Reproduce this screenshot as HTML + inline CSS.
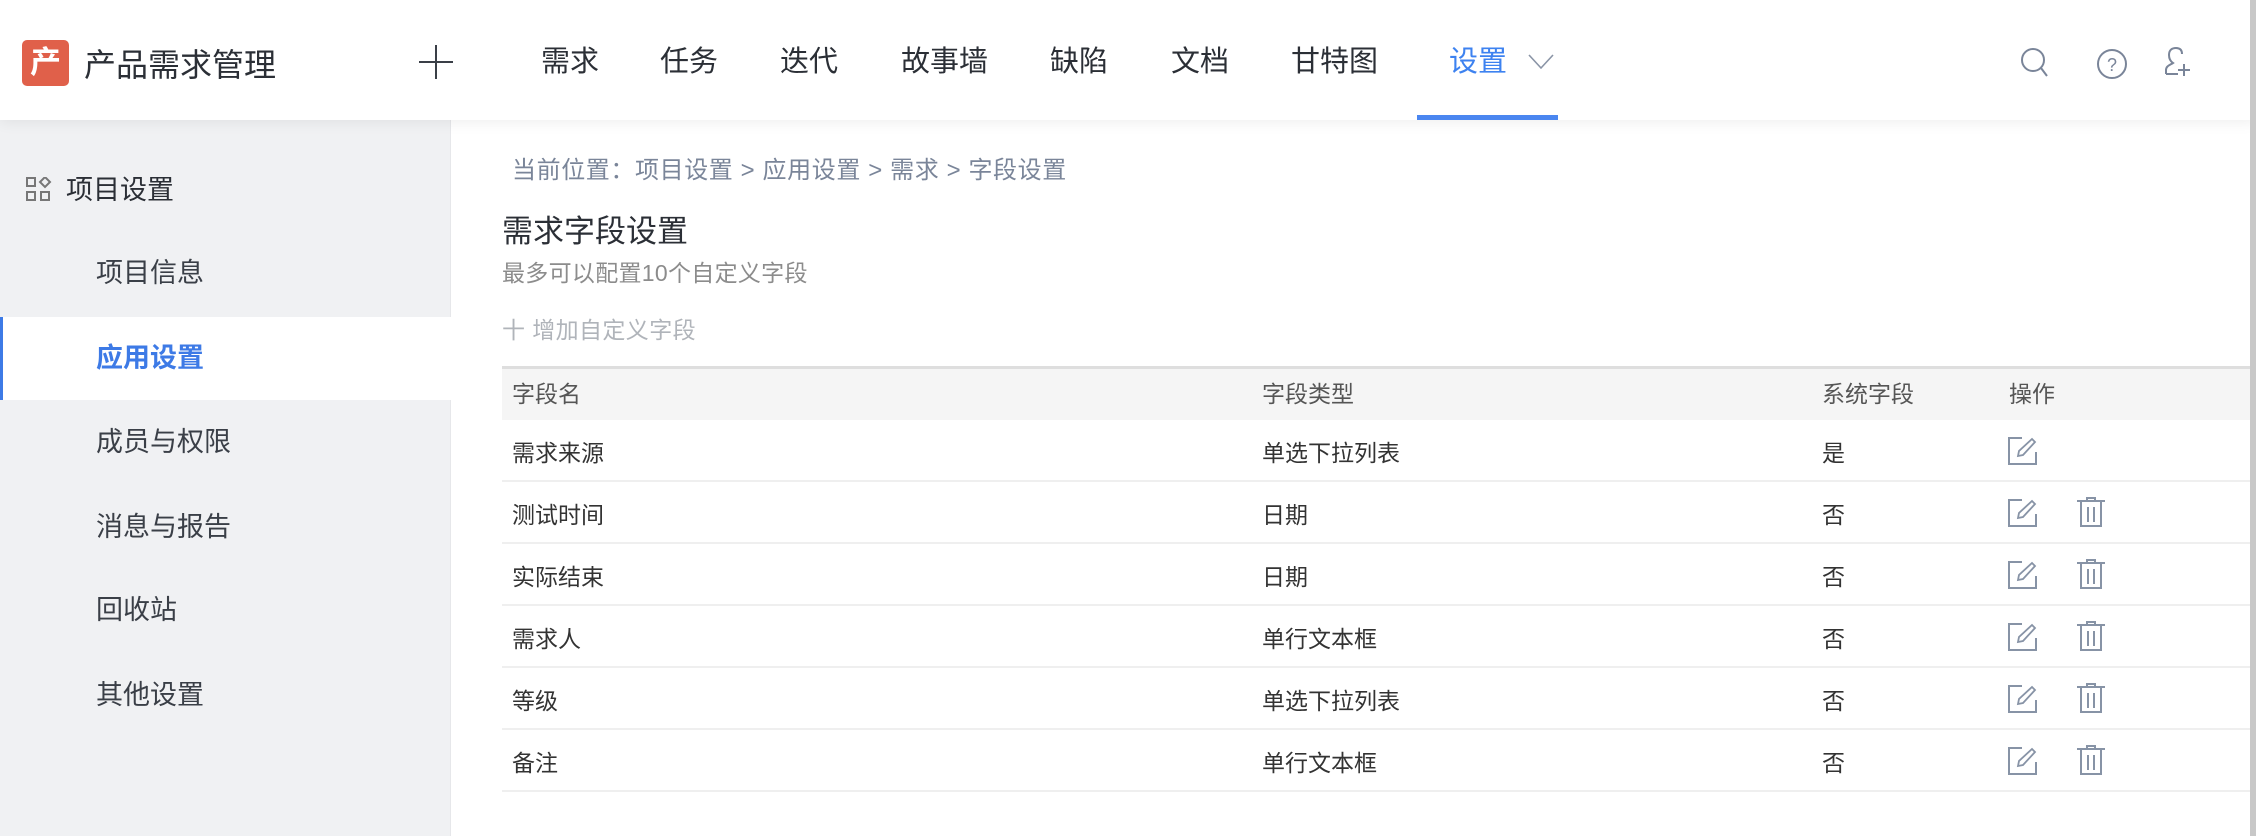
<!DOCTYPE html>
<html><head><meta charset="utf-8"><style>
*{margin:0;padding:0;box-sizing:border-box}
body{width:2256px;height:836px;overflow:hidden;background:#fff;font-family:"Liberation Sans","Noto Sans CJK SC",sans-serif;position:relative;color:#333}
.abs{position:absolute;white-space:nowrap}
#hdr{position:absolute;left:0;top:0;width:2256px;height:120px;background:#fff;box-shadow:0 2px 14px rgba(0,0,0,0.07);z-index:2}
.nav{position:absolute;top:40px;font-size:29px;color:#2b2f36;line-height:44px}
#side{position:absolute;left:0;top:120px;width:451px;height:716px;background:#f0f1f3;border-right:1px solid #e6e7ea}
.si{position:absolute;left:96px;font-size:27px;color:#3a3f47;line-height:40px}
.th,.td{position:absolute;font-size:23px;line-height:32px}
.th{color:#555}
.td{color:#333}
.row{position:absolute;left:502px;width:1748px;border-bottom:2px solid #efefef}
</style></head><body>
<div id="hdr">
 <div class="abs" style="left:22px;top:40px;width:47px;height:46px;background:#e0604a;border-radius:5px;color:#fff;font-size:31px;font-weight:bold;text-align:center;line-height:46px">产</div>
 <div class="abs" style="left:84px;top:44px;font-size:32px;color:#2b2f36;line-height:42px">产品需求管理</div>
 <svg class="abs" style="left:419px;top:45px" width="34" height="34"><path d="M17 0V34M0 17H34" stroke="#3a3f47" stroke-width="2"/></svg>
 <div class="nav" style="left:541px">需求</div>
 <div class="nav" style="left:660px">任务</div>
 <div class="nav" style="left:780px">迭代</div>
 <div class="nav" style="left:901px">故事墙</div>
 <div class="nav" style="left:1050px">缺陷</div>
 <div class="nav" style="left:1171px">文档</div>
 <div class="nav" style="left:1291px">甘特图</div>
 <div class="nav" style="left:1449px;color:#3d82f0">设置</div>
 <svg class="abs" style="left:1528px;top:54px" width="26" height="16"><path d="M1 1L13 14L25 1" fill="none" stroke="#8a94a6" stroke-width="1.6"/></svg>
 <div class="abs" style="left:1417px;top:115px;width:141px;height:5px;background:#4a86f0"></div>
 <svg class="abs" style="left:2020px;top:47px" width="30" height="32"><circle cx="13" cy="13" r="11" fill="none" stroke="#7a8599" stroke-width="2"/><path d="M21 21L27 29" stroke="#7a8599" stroke-width="2"/></svg>
 <svg class="abs" style="left:2096px;top:48px" width="32" height="32"><circle cx="16" cy="16" r="14" fill="none" stroke="#7a8599" stroke-width="2"/><text x="16" y="23" font-size="18" text-anchor="middle" fill="#7a8599" font-family="Liberation Sans">?</text></svg>
 <svg class="abs" style="left:2162px;top:46px" width="30" height="32"><path d="M4 28V24C4 20 8 19 11 17C8 15 7 12 7 9C7 4 10 2 14 2C18 2 20 4 20 8" fill="none" stroke="#7a8599" stroke-width="2"/><path d="M4 28H16M22 18V30M16 24H28" stroke="#7a8599" stroke-width="2"/></svg>
</div>
<div id="side">
 <svg class="abs" style="left:26px;top:57px" width="26" height="26"><rect x="1" y="1" width="8" height="8" fill="none" stroke="#777" stroke-width="2"/><rect x="1" y="15" width="8" height="8" fill="none" stroke="#777" stroke-width="2"/><rect x="15" y="15" width="8" height="8" fill="none" stroke="#777" stroke-width="2"/><path d="M19 0L24 5L19 10L14 5Z" fill="none" stroke="#777" stroke-width="2"/></svg>
 <div class="abs" style="left:66px;top:50px;font-size:27px;color:#2b2f36;line-height:40px">项目设置</div>
 <div class="si" style="top:133px">项目信息</div>
 <div class="abs" style="left:0;top:197px;width:451px;height:83px;background:#fff;border-left:3px solid #3d7ae6"></div>
 <div class="si" style="top:218px;color:#3d7ae6;font-weight:bold">应用设置</div>
 <div class="si" style="top:302px">成员与权限</div>
 <div class="si" style="top:387px">消息与报告</div>
 <div class="si" style="top:470px">回收站</div>
 <div class="si" style="top:555px">其他设置</div>
</div>
<div class="abs" style="left:512px;top:155px;font-size:24px;color:#7a8599;line-height:32px;letter-spacing:0.6px">当前位置：项目设置 &gt; 应用设置 &gt; 需求 &gt; 字段设置</div>
<div class="abs" style="left:502px;top:212px;font-size:31px;color:#2b2f36;line-height:40px">需求字段设置</div>
<div class="abs" style="left:502px;top:257px;font-size:23px;color:#8c8c8c;line-height:32px;letter-spacing:0.3px">最多可以配置10个自定义字段</div>
<div class="abs" style="left:502px;top:314px;font-size:23px;color:#b0b4ba;line-height:32px;letter-spacing:0.4px">十 增加自定义字段</div>
<div class="abs" style="left:502px;top:366px;width:1748px;height:54px;background:#f5f5f5;border-top:3px solid #dedede"></div>
<div class="th" style="left:512px;top:378px">字段名</div>
<div class="th" style="left:1262px;top:378px">字段类型</div>
<div class="th" style="left:1822px;top:378px">系统字段</div>
<div class="th" style="left:2009px;top:378px">操作</div>
<div class="row" style="top:420px;height:62px"></div>
<div class="row" style="top:482px;height:62px"></div>
<div class="row" style="top:544px;height:62px"></div>
<div class="row" style="top:606px;height:62px"></div>
<div class="row" style="top:668px;height:62px"></div>
<div class="row" style="top:730px;height:62px"></div>
<div class="td" style="left:512px;top:437px">需求来源</div><div class="td" style="left:1262px;top:437px">单选下拉列表</div><div class="td" style="left:1822px;top:437px">是</div>
<div class="td" style="left:512px;top:499px">测试时间</div><div class="td" style="left:1262px;top:499px">日期</div><div class="td" style="left:1822px;top:499px">否</div>
<div class="td" style="left:512px;top:561px">实际结束</div><div class="td" style="left:1262px;top:561px">日期</div><div class="td" style="left:1822px;top:561px">否</div>
<div class="td" style="left:512px;top:623px">需求人</div><div class="td" style="left:1262px;top:623px">单行文本框</div><div class="td" style="left:1822px;top:623px">否</div>
<div class="td" style="left:512px;top:685px">等级</div><div class="td" style="left:1262px;top:685px">单选下拉列表</div><div class="td" style="left:1822px;top:685px">否</div>
<div class="td" style="left:512px;top:747px">备注</div><div class="td" style="left:1262px;top:747px">单行文本框</div><div class="td" style="left:1822px;top:747px">否</div>
<svg class="abs" style="left:0;top:0" width="2256" height="836">
<defs>
<g id="ed"><path d="M14 2H1V28H28V16" fill="none" stroke="#8793a6" stroke-width="2"/><path d="M10 20L11 15L24 3L27 6L15 19Z" fill="none" stroke="#8793a6" stroke-width="1.8"/></g>
<g id="tr"><path d="M0 3H28M10 3V0H18V3" fill="none" stroke="#8793a6" stroke-width="2"/><path d="M4 4V28H24V4M11 9V24M17 9V24" fill="none" stroke="#8793a6" stroke-width="2"/></g>
</defs>
<use href="#ed" x="2008" y="436"/>
<use href="#ed" x="2008" y="498"/><use href="#tr" x="2077" y="498"/>
<use href="#ed" x="2008" y="560"/><use href="#tr" x="2077" y="560"/>
<use href="#ed" x="2008" y="622"/><use href="#tr" x="2077" y="622"/>
<use href="#ed" x="2008" y="684"/><use href="#tr" x="2077" y="684"/>
<use href="#ed" x="2008" y="746"/><use href="#tr" x="2077" y="746"/>
</svg>
<div class="abs" style="left:2250px;top:0;width:6px;height:836px;background:#c8c8c8;z-index:3"></div>
</body></html>
